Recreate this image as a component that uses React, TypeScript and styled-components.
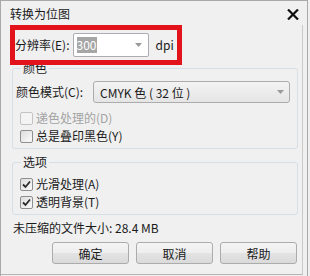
import React from "react";
import styled, { createGlobalStyle } from "styled-components";

const Global = createGlobalStyle`
  html, body { margin: 0; padding: 0; background: #f0f0f0; }
  body { font-family: "Noto Sans CJK SC", "Noto Sans", sans-serif; font-size: 12px; color: #1a1a1a; }
  * { box-sizing: border-box; }
`;

const Window = styled.div`
  width: 308px;
  height: 276px;
  background: #f0f0f0;
  border-left: 1px solid #a9a9a9;
  border-right: 1px solid #a9a9a9;
  border-top: 1px solid #a9a9a9;
  display: flex;
  flex-direction: column;
`;

const TitleBar = styled.div`
  height: 24px;
  display: flex;
  align-items: center;
  justify-content: space-between;
  padding: 2px 8px 0 9px;
  font-size: 12px;
  line-height: 16px;
`;

const Client = styled.div`
  flex: 1;
  display: flex;
  flex-direction: column;
  border-right: 1px solid #c9c9c9;
  border-bottom: 1px solid #b5b5b5;
  margin-right: 4px;
  margin-bottom: 1px;
`;

const Highlight = styled.div`
  position: relative;
  z-index: 1;
  width: 172px;
  height: 40px;
  margin-left: 9px;
  border: 5px solid #e3131c;
  display: flex;
  align-items: center;
`;

const Label = styled.span<{ $disabled?: boolean }>`
  font-size: 12px;
  line-height: 16px;
  white-space: nowrap;
  color: ${(p) => (p.$disabled ? "#a3a3a3" : "#1a1a1a")};
`;

const ComboInput = styled.div`
  width: 76px;
  height: 24px;
  margin-left: 3px;
  border: 1px solid #abadb3;
  border-radius: 2px;
  background: #fff;
  display: flex;
  align-items: center;
  justify-content: space-between;
  padding: 0 6px 0 3px;
`;

const Selected = styled.span`
  background: #a6a6a6;
  color: #fff;
  font-size: 12px;
  line-height: 16px;
  width: 20px;
  text-align: center;
`;

const Unit = styled.span`
  margin-left: 7px;
  font-size: 12px;
  line-height: 16px;
`;

const Group = styled.fieldset<{ $gap: number }>`
  margin: ${(p) => p.$gap}px 0 0 11px;
  width: 286px;
  border: 1px solid #d5dfe5;
  border-radius: 3px;
  padding: 5px 7px 3px 3px;
  display: flex;
  flex-direction: column;
`;

const Legend = styled.legend`
  margin-left: 5px;
  padding: 0 2px;
  font-size: 12px;
  line-height: 16px;
`;

const FieldRow = styled.div`
  display: flex;
  align-items: center;
  height: 22px;
  margin-bottom: 6px;
`;

const Select = styled.div`
  margin-left: auto;
  width: 197px;
  height: 22px;
  border: 1px solid #acacac;
  border-radius: 3px;
  background: linear-gradient(#f3f3f3, #e5e5e5);
  display: flex;
  align-items: center;
  justify-content: space-between;
  padding: 0 5px 0 6px;
  font-size: 12px;
`;

const CheckRow = styled.label`
  display: flex;
  align-items: center;
  height: 18px;
  margin-left: 4px;
  gap: 3px;
`;

const Box = styled.span<{ $disabled?: boolean }>`
  width: 13px;
  height: 13px;
  border: 1px solid ${(p) => (p.$disabled ? "#c4c4c4" : "#8e8f8f")};
  border-radius: 2px;
  background: ${(p) =>
    p.$disabled ? "#f4f4f4" : "linear-gradient(135deg, #dcdcdc, #fbfbfb)"};
  display: flex;
  align-items: center;
  justify-content: center;
`;

const Info = styled.div`
  margin: 5px 0 0 12px;
  font-size: 12px;
  line-height: 16px;
`;

const Buttons = styled.div`
  display: flex;
  justify-content: flex-end;
  gap: 7px;
  margin: 6px 5px 0 0;
`;

const Button = styled.button`
  width: 77px;
  height: 22px;
  border: 1px solid #acacac;
  border-radius: 3px;
  background: linear-gradient(#f4f4f4 0%, #eeeeee 50%, #e3e3e3 51%, #dadada 100%);
  font-family: inherit;
  font-size: 12px;
  color: #1a1a1a;
  padding: 0;
`;

const Arrow = () => (
  <svg width="7" height="4" viewBox="0 0 7 4">
    <path d="M0 0 H7 L3.5 4 Z" fill="#9a9a9a" />
  </svg>
);

const Check = () => (
  <svg width="9" height="9" viewBox="0 0 9 9">
    <path d="M1 4.5 L3.5 7 L8 1.5" fill="none" stroke="#2b2b2b" strokeWidth="1.8" />
  </svg>
);

const CheckBox: React.FC<{ label: string; checked?: boolean; disabled?: boolean }> = ({
  label,
  checked,
  disabled,
}) => (
  <CheckRow>
    <Box $disabled={disabled}>{checked && <Check />}</Box>
    <Label $disabled={disabled}>{label}</Label>
  </CheckRow>
);

export default function App() {
  return (
    <>
      <Global />
      <Window>
        <TitleBar>
          <span>转换为位图</span>
          <svg width="12" height="11" viewBox="0 0 12 11">
            <path d="M1 0.5 L11 10.5 M11 0.5 L1 10.5" stroke="#111" strokeWidth="2.2" />
          </svg>
        </TitleBar>
        <Client>
          <Highlight>
            <Label>分辨率(E):</Label>
            <ComboInput>
              <Selected>300</Selected>
              <Arrow />
            </ComboInput>
            <Unit>dpi</Unit>
          </Highlight>
          <Group $gap={-5}>
            <Legend>颜色</Legend>
            <FieldRow>
              <Label>颜色模式(C):</Label>
              <Select>
                <span>CMYK 色 ( 32 位 )</span>
                <Arrow />
              </Select>
            </FieldRow>
            <CheckBox label="递色处理的(D)" disabled />
            <CheckBox label="总是叠印黑色(Y)" />
          </Group>
          <Group $gap={5}>
            <Legend>选项</Legend>
            <CheckBox label="光滑处理(A)" checked />
            <CheckBox label="透明背景(T)" checked />
          </Group>
          <Info>未压缩的文件大小: 28.4 MB</Info>
          <Buttons>
            <Button>确定</Button>
            <Button>取消</Button>
            <Button>帮助</Button>
          </Buttons>
        </Client>
      </Window>
    </>
  );
}
